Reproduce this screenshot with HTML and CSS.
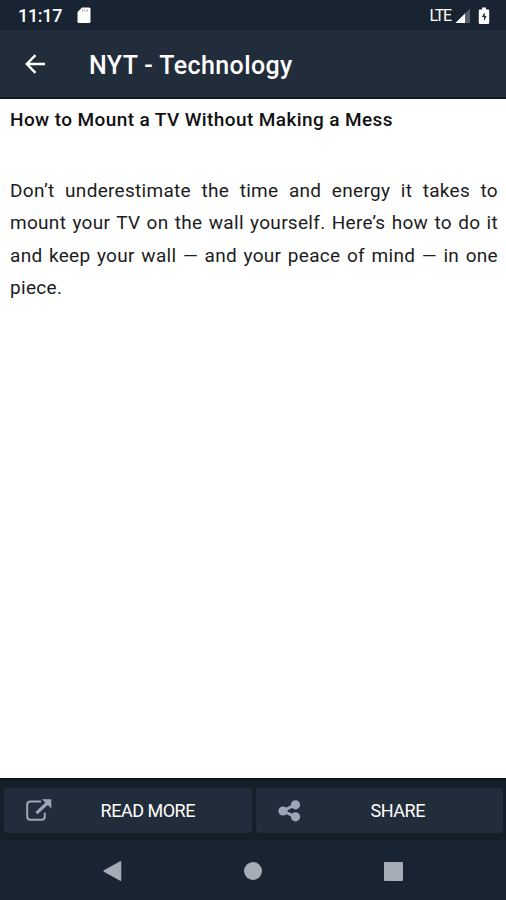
FILE: index.html
```html
<!DOCTYPE html>
<html lang="en">
<head>
  <meta charset="utf-8">
  <title>NYT - Technology</title>
  <link rel="stylesheet" href="styles.css">
</head>
<body>
  <div class="screen">
    <!-- Status bar -->
    <div class="status-bar">
      <span class="clock">11:17</span>
      <svg class="sd-icon" width="14" height="17" viewBox="0 0 14 17">
        <path d="M5 0.5H12.2Q13.5 .5 13.5 2V14.5Q13.5 16 12 16H2Q.5 16 .5 14.5V5Z" fill="#fff"/>
        <path d="M5.3 2.5v2M7.8 2.5v2M10.3 2.5v2" stroke="#8b9197" stroke-width="1"/>
      </svg>
      <span class="network">LTE</span>
      <svg class="signal-icon" width="16" height="16" viewBox="0 0 16 16">
        <path d="M15 0.5V15H0.5Z" fill="#56606b"/>
        <path d="M10 5.5V15H0.5Z" fill="#fff"/>
      </svg>
      <svg class="battery-icon" width="12" height="18" viewBox="0 0 12 18">
        <path d="M4 0.5h4v2h2q1.200 0 1.200 1.200v12.100q0 1.200-1.200 1.200h-8q-1.200 0-1.200-1.200v-12.100q0-1.200 1.200-1.200h2z" fill="#fff"/>
        <path d="M6.800 5.300L3.700 10h2.300v4.200L8.600 9H6.800z" fill="#27323e"/>
      </svg>
    </div>

    <!-- Toolbar -->
    <header class="toolbar">
      <svg class="back-icon" width="22" height="20" viewBox="0 0 22 20">
        <path d="M20 10H2M10.500 1.200L1.800 10l8.700 8.800" fill="none" stroke="#fff" stroke-width="2.400"/>
      </svg>
      <h1>NYT - Technology</h1>
    </header>

    <!-- Article -->
    <main class="article">
      <h2>How to Mount a TV Without Making a Mess</h2>
      <p>Don’t underestimate the time and energy it takes to mount your TV on the wall yourself. Here’s how to do it and keep your wall — and your peace of mind — in one piece.</p>
    </main>

    <!-- Actions -->
    <div class="actions">
      <button class="read-more">
        <svg width="26" height="24" viewBox="0 0 26 24">
          <path d="M15 2.500H4.500Q1.200 2.500 1.200 5.800V17.500Q1.200 20.800 4.500 20.800H15.500Q18.800 20.800 18.800 17.500V13.500" fill="none" stroke="#9aa7b6" stroke-width="2"/>
          <path d="M10.500 14.200L22 3.500" stroke="#9aa7b6" stroke-width="3.200"/>
          <path d="M16 0.200H25.300V9.500Z" fill="#9aa7b6"/>
        </svg>
        <span>READ MORE</span>
      </button>
      <button class="share">
        <svg width="23" height="24" viewBox="0 0 23 24">
          <path d="M17.500 5.500L5 12l12.500 5.800" fill="none" stroke="#9aa7b6" stroke-width="3"/>
          <circle cx="5" cy="12" r="4.600" fill="#9aa7b6"/>
          <circle cx="17.500" cy="5.800" r="4.600" fill="#9aa7b6"/>
          <circle cx="17.500" cy="17.800" r="4.600" fill="#9aa7b6"/>
        </svg>
        <span>SHARE</span>
      </button>
    </div>

    <!-- Navigation bar -->
    <nav class="nav-bar">
      <svg width="20" height="22" viewBox="0 0 20 22">
        <path d="M18.500 1.800V20.200L2.200 11Z" fill="#a5acb5" stroke="#a5acb5" stroke-width="1.500" stroke-linejoin="round"/>
      </svg>
      <span class="home"></span>
      <span class="recents"></span>
    </nav>
  </div>
</body>
</html>
```
FILE: styles.css
```css
body {
  margin: 0;
  font-family: Roboto, "Liberation Sans", sans-serif;
}

.screen {
  display: flex;
  flex-direction: column;
  width: 506px;
  height: 900px;
  background-color: #fff;
  overflow: hidden;
}

.status-bar {
  display: flex;
  align-items: center;
  box-sizing: border-box;
  height: 30px;
  padding: 1px 16px 0 18px;
  background-color: #182431;
  color: #fff;
}

.clock {
  font-size: 18px;
  font-weight: 500;
  letter-spacing: -0.3px;
}

.sd-icon {
  margin-left: 15px;
}

.network {
  margin-left: auto;
  font-size: 16px;
  letter-spacing: -1.2px;
}

.signal-icon {
  margin: 0 7px 0 4px;
}

.toolbar {
  display: flex;
  align-items: center;
  box-sizing: border-box;
  height: 69px;
  padding-left: 25px;
  border-bottom: 2px solid #101823;
  background-color: #222d3b;
  color: #fff;
}

.toolbar h1 {
  margin: 4px 0 0 42px;
  font-size: 25px;
  font-weight: 500;
  letter-spacing: 0.4px;
}

.article {
  flex: 1;
  padding: 9px 8px 0 10px;
  color: #1c1c1c;
}

.article h2 {
  margin: 0;
  font-size: 19px;
  line-height: 24px;
  font-weight: 500;
  letter-spacing: 0.4px;
  color: #111;
}

.article p {
  margin: 43px 0 0;
  font-size: 19px;
  line-height: 32.4px;
  letter-spacing: 0.3px;
  text-align: justify;
}

.actions {
  display: flex;
  gap: 4px;
  box-sizing: border-box;
  height: 62px;
  padding: 8px 3px 9px 4px;
  border-top: 2px solid #0c131b;
  background-color: #151f2a;
}

.actions button {
  display: flex;
  flex: 1;
  align-items: center;
  height: 45px;
  padding: 0 8px 0 22px;
  border: none;
  border-radius: 4px;
  background-color: #222d3b;
  color: #fff;
  font-family: inherit;
  font-size: 18px;
  letter-spacing: -0.5px;
  cursor: pointer;
}

.actions span {
  flex: 1;
  text-align: center;
}

.nav-bar {
  display: flex;
  align-items: center;
  justify-content: space-between;
  box-sizing: border-box;
  height: 60px;
  padding: 2px 103px 0 102px;
  background-color: #182431;
}

.home {
  width: 18px;
  height: 18px;
  border-radius: 50%;
  background-color: #a5acb5;
}

.recents {
  width: 19px;
  height: 19px;
  border-radius: 1px;
  background-color: #a5acb5;
}
```
